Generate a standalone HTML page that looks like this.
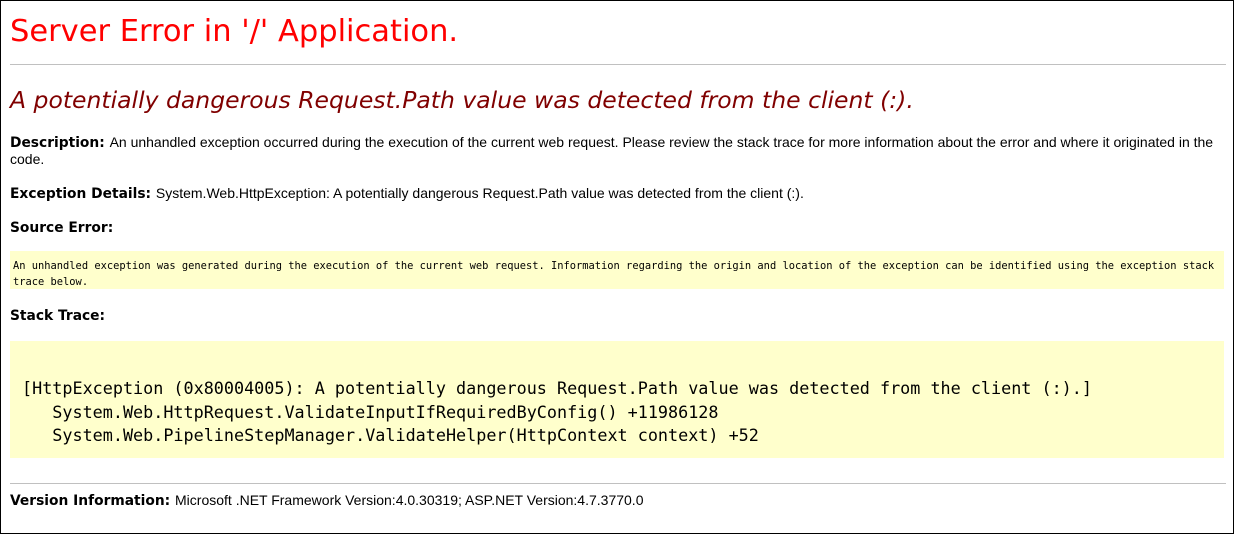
<!DOCTYPE html>
<html><head><meta charset="utf-8"><style>
html,body{margin:0;padding:0;background:#fff}
body{width:1234px;height:534px;position:relative;overflow:hidden;font-family:"Liberation Sans",Arial,sans-serif;font-size:14px;color:#000}
.frame{position:absolute;left:0;top:0;width:1232px;height:532px;border:1px solid #000}
.a{position:absolute;white-space:nowrap}
.v{font-family:"DejaVu Sans",Verdana,sans-serif}
b.v{font-size:13.8px;font-weight:bold}
.hr{position:absolute;left:10px;width:1216px;height:1px;background:#c0c0c0}
.box{position:absolute;left:10px;width:1214px;background:#ffffcc}
.m{font-family:"DejaVu Sans Mono","Liberation Mono",monospace}
</style></head><body>
<div class="frame"></div>
<div class="a v" style="left:10px;top:13px;font-size:30.5px;color:#ff0000;line-height:38px">Server Error in '/' Application.</div>
<div class="hr" style="top:64px"></div>
<div class="a v" style="left:10px;top:85px;font-size:23.5px;font-style:italic;color:#800000;line-height:30px">A potentially dangerous Request.Path value was detected from the client (:).</div>
<div class="a" style="left:10px;top:134px;line-height:17px"><b class="v">Description: </b>An unhandled exception occurred during the execution of the current web request. Please review the stack trace for more information about the error and where it originated in the</div>
<div class="a" style="left:10px;top:151px;line-height:17px">code.</div>
<div class="a" style="left:10px;top:185px;line-height:17px"><b class="v">Exception Details: </b>System.Web.HttpException: A potentially dangerous Request.Path value was detected from the client (:).</div>
<div class="a" style="left:10px;top:219px;line-height:17px"><b class="v">Source Error:</b></div>
<div class="box" style="top:251px;height:38px"></div>
<div class="a m" style="left:13px;top:258px;font-size:10.4px;line-height:16px">An unhandled exception was generated during the execution of the current web request. Information regarding the origin and location of the exception can be identified using the exception stack<br>trace below.</div>
<div class="a" style="left:10px;top:307px;line-height:17px"><b class="v">Stack Trace:</b></div>
<div class="box" style="top:341px;height:117px"></div>
<div class="a m" style="left:22px;top:377px;font-size:16.78px;line-height:23.5px;white-space:pre">[HttpException (0x80004005): A potentially dangerous Request.Path value was detected from the client (:).]
   System.Web.HttpRequest.ValidateInputIfRequiredByConfig() +11986128
   System.Web.PipelineStepManager.ValidateHelper(HttpContext context) +52</div>
<div class="hr" style="top:483px"></div>
<div class="a" style="left:10px;top:492px;line-height:17px"><b class="v">Version Information: </b>Microsoft .NET Framework Version:4.0.30319; ASP.NET Version:4.7.3770.0</div>
</body></html>
